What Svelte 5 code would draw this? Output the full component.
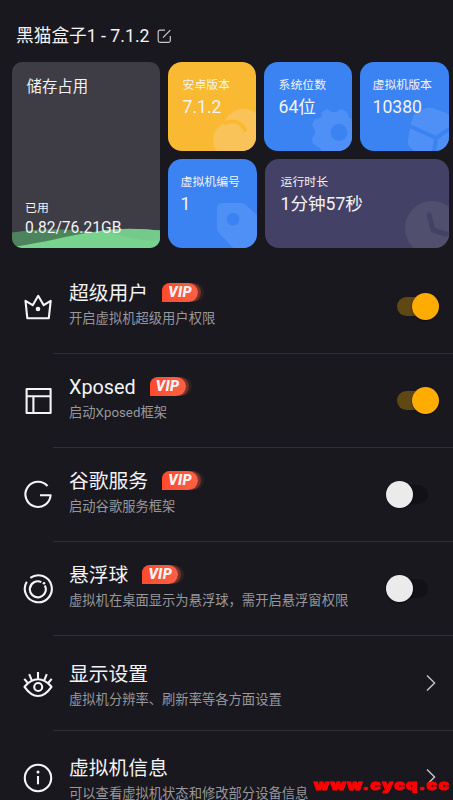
<script>
  let settings = $state([
    { icon: 'crown', title: '超级用户', desc: '开启虚拟机超级用户权限', vip: true, toggle: true, on: true },
    { icon: 'layout', title: 'Xposed', desc: '启动Xposed框架', vip: true, toggle: true, on: true },
    { icon: 'google', title: '谷歌服务', desc: '启动谷歌服务框架', vip: true, toggle: true, on: false },
    { icon: 'ball', title: '悬浮球', desc: '虚拟机在桌面显示为悬浮球，需开启悬浮窗权限', vip: true, toggle: true, on: false },
    { icon: 'eye', title: '显示设置', desc: '虚拟机分辨率、刷新率等各方面设置' },
    { icon: 'info', title: '虚拟机信息', desc: '可以查看虚拟机状态和修改部分设备信息' }
  ]);
</script>

<main class="screen">
  <header class="header">
    <h1>黑猫盒子1 - 7.1.2</h1>
    <svg class="edit" width="15" height="15" viewBox="0 0 15 15">
      <path d="M8 1.2H3Q1.2 1.2 1.2 3V11.5Q1.2 13.3 3 13.3H11.5Q13.3 13.3 13.3 11.5V7M6 8.7L13.3 1.2" />
    </svg>
  </header>

  <section class="cards">
    <div class="card storage">
      <h2>储存占用</h2>
      <svg class="wave" width="148" height="20" viewBox="0 0 148 20">
        <path d="M0 4.5C24 1 42 .5 62 2C92 5 116 13 148 14V20H0Z" fill="#4d845d" />
        <path d="M0 19C50 12 70 2 118 1Q134 1 148 2.5V20H0Z" fill="#78d38f" />
        <path d="M88 2.5C104 6 120 12 148 13V2.5Q118 -1 88 2.5Z" fill="#74ca8b" />
      </svg>
      <div class="usage">
        <span class="label">已用</span>
        <span class="amount">0.82/76.21GB</span>
      </div>
    </div>

    <div class="card small yellow">
      <svg class="art" width="88" height="89" viewBox="0 0 88 89">
        <path d="M57 59C60 52 67 47 75 47C81 47 86 49 90 53V91H79V70C76 64 68 59 57 59Z" fill="#fac35a" />
        <circle cx="63" cy="78" r="18" fill="#fac35a" />
        <path d="M57 61C66 57 74 61 77 68" fill="none" stroke="#f9b932" stroke-width="4" stroke-linecap="round" />
      </svg>
      <span class="label">安卓版本</span>
      <span class="value">7.1.2</span>
    </div>

    <div class="card small blue">
      <svg class="art" width="88" height="89" viewBox="0 0 88 89">
        <path fill-rule="evenodd" d="M58 50L63 47L68 50H72L77 47L83 50L85 56L91 58V84L84 86L82 92H59L56 86L49 82L48 76L51 72V68L48 63L51 57L57 56ZM75 62A8.5 8.5 0 1 0 75 79A8.5 8.5 0 1 0 75 62Z" fill="#4f90f6" />
      </svg>
      <span class="label">系统位数</span>
      <span class="value">64位</span>
    </div>

    <div class="card small blue version">
      <svg class="art" width="89" height="89" viewBox="0 0 89 89">
        <path d="M57 50L66 46Q69 45 73 46L91 53V91H56L50 85Q47 82 48 78L50 66Q52 53 57 50Z" fill="#4f90f6" />
        <path d="M52 65L76 76L88 68M76 76L74 91" fill="none" stroke="#3b82f2" stroke-width="4" stroke-linecap="round" stroke-linejoin="round" />
      </svg>
      <span class="label">虚拟机版本</span>
      <span class="value">10380</span>
    </div>

    <div class="card small blue number">
      <svg class="art" width="89" height="89" viewBox="0 0 89 89">
        <path fill-rule="evenodd" d="M55 44H73Q76 44 79 47L91 58V91H67L51 74Q49 72 49 69V50Q49 44 55 44ZM65 54A6.3 6.3 0 1 0 65 66.6A6.3 6.3 0 1 0 65 54Z" fill="#4f90f6" />
      </svg>
      <span class="label">虚拟机编号</span>
      <span class="value">1</span>
    </div>

    <div class="card small runtime">
      <svg class="art" width="89" height="89" viewBox="0 0 89 89">
        <circle cx="72" cy="69" r="27" fill="#504f6e" />
        <path d="M69 56L73 71L86 75" fill="none" stroke="#434266" stroke-width="5" stroke-linecap="round" stroke-linejoin="round" />
      </svg>
      <span class="label">运行时长</span>
      <span class="value">1分钟57秒</span>
    </div>
  </section>

  <ul class="settings">
    {#each settings as item}
      <li class="row">
        <svg class="icon" width="32" height="32" viewBox="0 0 32 32">
          {#if item.icon === 'crown'}
            <path d="M3.5 9.8L10.7 14.2L16.2 4.8L21.7 14.2L28.7 9.8L26.8 27.2H5.3Z" />
            <circle cx="16" cy="18" r="2.3" class="solid" />
          {:else if item.icon === 'layout'}
            <path d="M4.6 4H28.6V28H4.6ZM4.6 11.2H28.6M11.4 11.2V28" />
          {:else if item.icon === 'google'}
            <path d="M25.5 7A12.6 12.6 0 1 0 28.6 16.2H18" />
          {:else if item.icon === 'ball'}
            <path d="M8.3 4.9A13.5 13.5 0 1 1 4.8 8.7M19.3 9.1A8 8 0 1 0 22.8 12.4" />
            <circle cx="22" cy="10.2" r="1.3" class="solid" />
          {:else if item.icon === 'eye'}
            <path d="M2.5 18.8Q9 11.3 16 11.3T29.5 18.8Q23 28 16 28T2.5 18.8ZM16 11V4M9.8 12.3L7.2 6.2M22.2 12.3L24.8 6.2M5.8 15L2.3 10.8M26.2 15L29.7 10.8" />
            <circle cx="16.2" cy="19" r="4" />
          {:else}
            <circle cx="16" cy="16" r="13.2" />
            <path d="M16 14V22.3" />
            <circle cx="16" cy="9.9" r="1.5" class="solid" />
          {/if}
        </svg>

        <div class="content">
          <div class="text" class:link={!item.toggle}>
            <div class="title">
              <span>{item.title}</span>
              {#if item.vip}
                <span class="vip"><b>VIP</b></span>
              {/if}
            </div>
            <p>{item.desc}</p>
          </div>

          {#if item.toggle}
            <button
              class="switch"
              class:on={item.on}
              role="switch"
              aria-checked={item.on}
              aria-label={item.title}
              onclick={() => (item.on = !item.on)}
            >
              <span class="knob"></span>
            </button>
          {:else}
            <svg class="arrow" width="10" height="18" viewBox="0 0 10 18">
              <path d="M1 1.5L8.6 9L1 16.5" />
            </svg>
          {/if}
        </div>
      </li>
    {/each}
  </ul>

  <svg class="site" width="139" height="24" viewBox="0 0 139 24">
    <text transform="translate(.5 13.5) scale(1.22 1)">www.cycq.cc</text>
  </svg>
</main>

<style>
  :global(body) {
    background: #19181f;
    overflow: hidden;
  }

  .screen {
    position: relative;
    width: 453px;
    height: 800px;
    overflow: hidden;
    background: #19181f;
    color: #f3f3f5;
    font-family: Roboto, "Noto Sans CJK SC", sans-serif;
  }

  .header {
    display: flex;
    align-items: center;
    box-sizing: border-box;
    height: 62px;
    padding: 10px 16px 0;
    gap: 7px;
  }

  h1,
  h2,
  p {
    margin: 0;
    font-weight: 400;
  }

  h1 {
    font-size: 17.7px;
    line-height: 24px;
  }

  .edit path {
    fill: none;
    stroke: #c9c9cd;
    stroke-width: 1.2;
    stroke-linejoin: round;
  }

  .cards {
    display: grid;
    grid-template-columns: 148px 8px 88px 1px 7px 88px 8px 89px;
    grid-template-rows: 89px 89px;
    row-gap: 8px;
    padding-left: 12px;
  }

  .card {
    position: relative;
    overflow: hidden;
    border-radius: 14px;
  }

  .storage {
    display: flex;
    flex-direction: column;
    justify-content: space-between;
    box-sizing: border-box;
    grid-row: 1 / 3;
    padding: 14px 13px 9px;
    border-radius: 10px;
    background: #3e3c44;
  }

  h2 {
    padding-left: 1.5px;
    font-size: 15.4px;
    line-height: 22px;
  }

  .wave {
    position: absolute;
    left: 0;
    bottom: 0;
  }

  .usage {
    position: relative;
    display: flex;
    flex-direction: column;
  }

  .usage .amount {
    font-size: 15.6px;
    line-height: 22px;
  }

  .small {
    display: flex;
    flex-direction: column;
    box-sizing: border-box;
    padding: 14px 0 0 14.5px;
  }

  .yellow {
    grid-column: 3;
    background: #f9b932;
  }

  .blue {
    grid-column: 6;
    background: #3b82f2;
  }

  .version {
    grid-column: 8;
    padding-left: 12.5px;
  }

  .number {
    grid-column: 3 / 5;
    grid-row: 2;
    padding-left: 12.5px;
  }

  .runtime {
    grid-column: 6 / 9;
    grid-row: 2;
    margin-left: 1px;
    padding-left: 15.5px;
    background: #434266;
  }

  .art {
    position: absolute;
    right: 0;
    bottom: 0;
  }

  .label,
  .value {
    position: relative;
    white-space: nowrap;
  }

  .label {
    font-size: 11.9px;
    line-height: 18px;
  }

  .value {
    font-size: 17.6px;
    line-height: 26px;
  }

  .settings {
    margin: 11.4px 0 0;
    padding: 0;
    list-style: none;
  }

  .row {
    display: flex;
    height: 94.25px;
    padding-left: 22px;
  }

  .icon {
    flex: none;
    align-self: center;
    margin-right: -1px;
    fill: none;
    stroke: #f5f5f6;
    stroke-width: 2.1;
    stroke-linejoin: round;
  }

  .icon .solid {
    fill: #f5f5f6;
    stroke: none;
  }

  .content {
    display: flex;
    flex: 1;
    align-items: center;
    justify-content: space-between;
    box-sizing: border-box;
    padding: 0 14px 0 16px;
    border-bottom: 1px solid #302f37;
  }

  .text {
    padding-bottom: 3px;
  }

  .text.link {
    padding: 6px 0 0;
  }

  .title {
    display: flex;
    align-items: center;
    height: 28px;
    gap: 14px;
    font-size: 19.8px;
    line-height: 28px;
  }

  p {
    color: #98979c;
    font-size: 13.3px;
    line-height: 22px;
    white-space: nowrap;
  }

  .vip {
    display: flex;
    align-items: center;
    justify-content: center;
    width: 36px;
    height: 19px;
    margin-bottom: 3px;
    border-radius: 8px 10px 10px 0;
    background: linear-gradient(90deg, #ff4a2c, #fc6145);
    box-shadow: 3px 0 0 #773329, 6px 0 0 #2e1f23;
  }

  .vip b {
    font: italic 900 14.5px/19px Roboto, sans-serif;
    letter-spacing: 0.4px;
  }

  .switch {
    display: flex;
    align-items: center;
    flex: none;
    width: 42px;
    height: 19px;
    margin-right: 11px;
    padding: 0;
    border: 0;
    border-radius: 10px;
    background: #121216;
  }

  .switch.on {
    justify-content: flex-end;
    margin-right: 0.5px;
    background: #604815;
  }

  .knob {
    width: 27px;
    height: 27px;
    flex: none;
    border-radius: 50%;
    background: #ebebeb;
    box-shadow: 0 1px 2px #0008;
  }

  .on .knob {
    background: #ffac00;
  }

  .arrow {
    margin-right: 3px;
    fill: none;
    stroke: #c6c6ca;
    stroke-width: 1.4;
  }

  .site {
    position: absolute;
    right: 1px;
    bottom: 0;
  }

  .site text {
    fill: #f00;
    stroke: #f00;
    stroke-width: 0.9;
    font: 900 14.2px Inter, "DejaVu Sans", sans-serif;
    letter-spacing: 1.2px;
  }
</style>
